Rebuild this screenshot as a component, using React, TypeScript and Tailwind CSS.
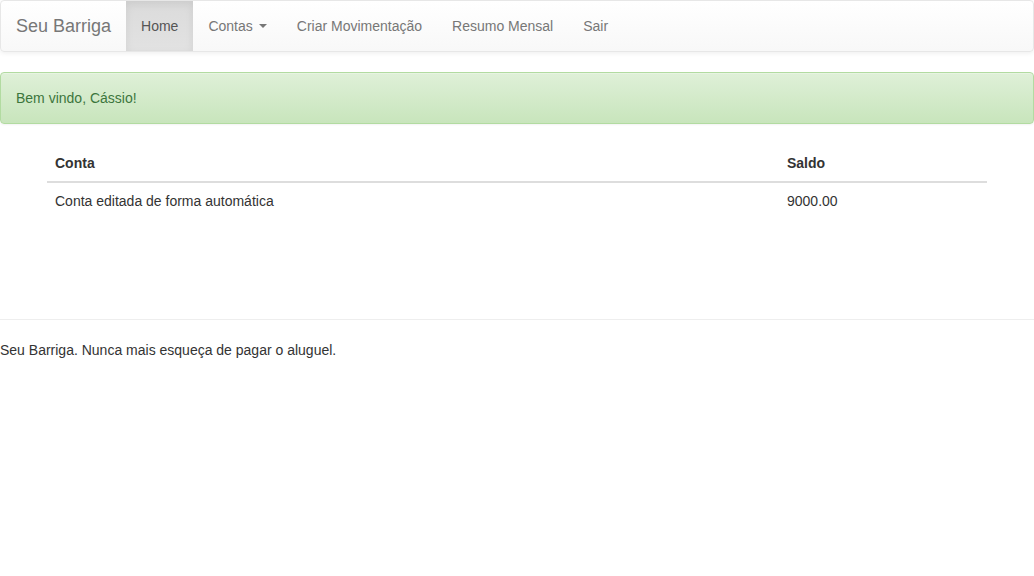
export default function App() {
  const links = ["Criar Movimentação", "Resumo Mensal", "Sair"];
  return (
    <div className="min-h-[576px] bg-white text-[14px] leading-[20px] text-[#333]" style={{ fontFamily: '"Liberation Sans", Arial, sans-serif' }}>
      <nav className="mb-5 flex h-[52px] rounded border border-[#e7e7e7] bg-gradient-to-b from-white to-[#f8f8f8] shadow-[0_1px_5px_rgba(0,0,0,0.075),inset_0_1px_0_rgba(255,255,255,0.15)]">
        <div className="flex h-[50px] items-center px-[15px] text-[18px] text-[#777]">Seu Barriga</div>
        <div className="flex h-[50px] items-center bg-gradient-to-b from-[#dbdbdb] to-[#e2e2e2] px-[15px] text-[#555] shadow-[inset_0_3px_8px_rgba(0,0,0,0.075)]">Home</div>
        <div className="flex h-[50px] items-center px-[15px] text-[#777]">
          Contas
          <span className="ml-[6px] inline-block h-0 w-0 border-x-[4px] border-t-[4px] border-x-transparent border-t-[#777]" />
        </div>
        {links.map((l) => (
          <div key={l} className="flex h-[50px] items-center px-[15px] text-[#777]">{l}</div>
        ))}
      </nav>
      <div className="mb-5 rounded border border-[#b2dba1] bg-gradient-to-b from-[#dff0d8] to-[#c8e5bc] p-[15px] text-[#3c763d] shadow-[inset_0_1px_0_rgba(255,255,255,0.25),0_1px_2px_rgba(0,0,0,0.05)]">
        Bem vindo, Cássio!
      </div>
      <div className="mx-auto w-[970px] px-[15px] pt-px">
        <table className="w-[940px] border-collapse">
          <thead>
            <tr>
              <th className="w-[732px] border-b-2 border-[#ddd] p-2 text-left font-bold">Conta</th>
              <th className="border-b-2 border-[#ddd] p-2 text-left font-bold">Saldo</th>
            </tr>
          </thead>
          <tbody>
            <tr>
              <td className="p-2">Conta editada de forma automática</td>
              <td className="p-2">9000.00</td>
            </tr>
          </tbody>
        </table>
      </div>
      <div className="mt-[100px] border-t border-[#eee]" />
      <div className="mt-5">Seu Barriga. Nunca mais esqueça de pagar o aluguel.</div>
    </div>
  );
}
